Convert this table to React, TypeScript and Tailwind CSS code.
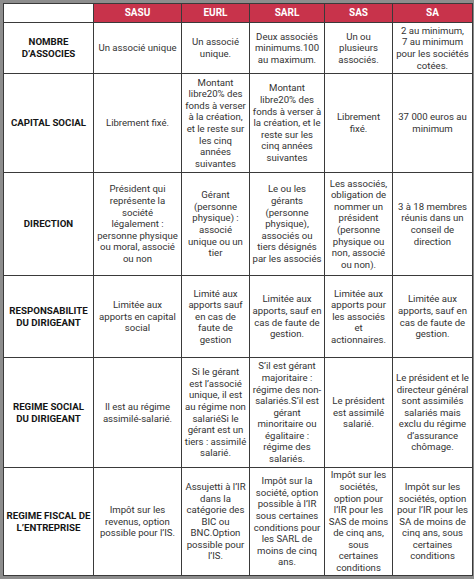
const headers = ["SASU", "EURL", "SARL", "SAS", "SA"];

const rows: { label: string; h: string; cells: string[] }[] = [
  {
    label: "NOMBRE\nD’ASSOCIES",
    h: "h-[51px]",
    cells: [
      "Un associé unique",
      "Un associé\nunique.",
      "Deux associés\nminimums.100\nau maximum.",
      "Un ou\nplusieurs\nassociés.",
      "2 au minimum,\n7 au minimum\npour les sociétés\ncotées.",
    ],
  },
  {
    label: "CAPITAL SOCIAL",
    h: "h-[99px]",
    cells: [
      "Librement fixé.",
      "Montant\nlibre20% des\nfonds à verser\nà la création,\net le reste sur\nles cinq\nannées\nsuivantes",
      "Montant\nlibre20% des\nfonds à verser à\nla création, et le\nreste sur les\ncinq années\nsuivantes",
      "Librement\nfixé.",
      "37 000 euros au\nminimum",
    ],
  },
  {
    label: "DIRECTION",
    h: "h-[103px]",
    cells: [
      "Président qui\nreprésente la\nsociété\nlégalement :\npersonne physique\nou moral, associé\nou non",
      "Gérant\n(personne\nphysique) :\nassocié\nunique ou un\ntier",
      "Le ou les\ngérants\n(personne\nphysique),\nassociés ou\ntiers désignés\npar les associés",
      "Les associés,\nobligation de\nnommer un\nprésident\n(personne\nphysique ou\nnon, associé\nou non).",
      "3 à 18 membres\nréunis dans un\nconseil de\ndirection",
    ],
  },
  {
    label: "RESPONSABILITE\nDU DIRIGEANT",
    h: "h-[82px]",
    cells: [
      "Limitée aux\napports en capital\nsocial",
      "Limité aux\napports sauf\nen cas de\nfaute de\ngestion",
      "Limitée aux\napports, sauf en\ncas de faute de\ngestion.",
      "Limitée aux\napports pour\nles associés\net\nactionnaires.",
      "Limitée aux\napports, sauf en\ncas de faute de\ngestion.",
    ],
  },
  {
    label: "REGIME SOCIAL\nDU DIRIGEANT",
    h: "h-[110px]",
    cells: [
      "Il est au régime\nassimilé-salarié.",
      "Si le gérant\nest l’associé\nunique, il est\nau régime non\nsalariéSi le\ngérant est un\ntiers : assimilé\nsalarié.",
      "S’il est gérant\nmajoritaire :\nrégime des non-\nsalariés.S’il est\ngérant\nminoritaire ou\négalitaire :\nrégime des\nsalariés.",
      "Le président\nest assimilé\nsalarié.",
      "Le président et le\ndirecteur général\nsont assimilés\nsalariés mais\nexclu du régime\nd’assurance\nchômage.",
    ],
  },
  {
    label: "REGIME FISCAL DE\nL’ENTREPRISE",
    h: "h-[108px]",
    cells: [
      "Impôt sur les\nrevenus, option\npossible pour l’IS.",
      "Assujetti à l’IR\ndans la\ncatégorie des\nBIC ou\nBNC.Option\npossible pour\nl’IS.",
      "Impôt sur la\nsociété, option\npossible à l’IR\nsous certaines\nconditions pour\nles SARL de\nmoins de cinq\nans.",
      "Impôt sur les\nsociétés,\noption pour\nl’IR pour les\nSAS de moins\nde cinq ans,\nsous\ncertaines\nconditions",
      "Impôt sur les\nsociétés, option\npour l’IR pour les\nSA de moins de\ncinq ans, sous\ncertaines\nconditions",
    ],
  },
];

const Lines = ({ text }: { text: string }) => (
  <>
    {text.split("\n").map((line, i) => (
      <span key={i} className="block whitespace-nowrap">
        {line}
      </span>
    ))}
  </>
);

export default function App() {
  return (
    <div className="w-[474px] h-[579px] bg-[#8d8d8d] pt-[3px] pl-[3px] overflow-hidden font-['Roboto',sans-serif]">
      <table className="table-fixed border-collapse w-[469px] bg-white text-[#333333]">
        <colgroup>
          <col className="w-[90px]" />
          <col className="w-[88px]" />
          <col className="w-[68px]" />
          <col className="w-[75px]" />
          <col className="w-[68px]" />
          <col className="w-[80px]" />
        </colgroup>
        <thead>
          <tr className="h-[19px]">
            <th className="border border-[#3a3a3a] bg-white p-0"></th>
            {headers.map((h) => (
              <th
                key={h}
                className="border border-[#3a3a3a] bg-[#c8334b] text-white text-[10px] font-bold leading-none p-0"
              >
                {h}
              </th>
            ))}
          </tr>
        </thead>
        <tbody>
          {rows.map((r) => (
            <tr key={r.label} className={r.h}>
              <td className="border border-[#3a3a3a] text-center align-middle text-[9.7px] font-bold leading-[12px] text-[#151515] p-0 overflow-hidden">
                <Lines text={r.label} />
              </td>
              {r.cells.map((c, i) => (
                <td
                  key={i}
                  className="border border-[#3a3a3a] text-center align-middle text-[9.6px] leading-[11.6px] p-0 overflow-hidden"
                >
                  <Lines text={c} />
                </td>
              ))}
            </tr>
          ))}
        </tbody>
      </table>
    </div>
  );
}
